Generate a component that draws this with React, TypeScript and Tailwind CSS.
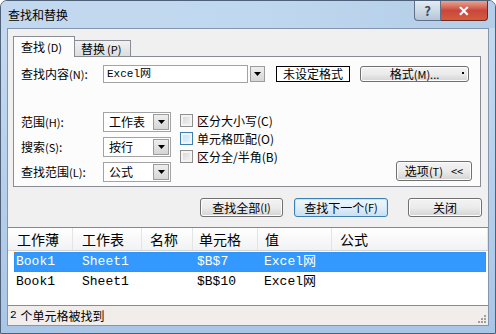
import React from 'react';

const cjk = "font-['Noto_Sans_CJK_SC',sans-serif]";
const mono = "font-['Liberation_Mono','Noto_Sans_CJK_SC',monospace]";

function Arrow() {
  return (
    <svg width="7" height="4" viewBox="0 0 7 4">
      <path d="M0 0h7L3.5 4z" fill="#000" />
    </svg>
  );
}

function Btn({ children, className = '', focus = false }: { children: React.ReactNode; className?: string; focus?: boolean }) {
  return (
    <div
      className={`flex items-center justify-center rounded-[3px] border text-[12px] text-black ${
        focus
          ? 'border-[#3c7fb1] bg-gradient-to-b from-[#eef6fc] via-[#e1eef8] to-[#c9dff0] shadow-[inset_0_0_0_1px_#bfe6fb]'
          : 'border-[#707070] bg-gradient-to-b from-[#f3f3f3] via-[#ebebeb] to-[#d4d4d4] shadow-[inset_0_0_0_1px_#fcfcfc]'
      } ${className}`}
    >
      {children}
    </div>
  );
}

function Combo({ value }: { value: string }) {
  return (
    <div className="flex h-[20px] w-[68px] items-center border border-[#a3a3a3] bg-white">
      <span className="flex-1 pl-[5px] text-[12px] leading-none">{value}</span>
      <div className="mr-[1px] flex h-[16px] w-[16px] items-center justify-center border border-[#9c9c9c] bg-gradient-to-b from-[#eeeeee] to-[#d6d6d6]">
        <Arrow />
      </div>
    </div>
  );
}

function Check({ label, hover = false }: { label: string; hover?: boolean }) {
  return (
    <div className="flex h-[13px] items-center gap-[4px]">
      <div
        className={`h-[13px] w-[13px] border ${
          hover ? 'border-[#3c7fb1] bg-gradient-to-br from-[#b9e1fa] to-[#e9f6fd]' : 'border-[#8f8f8f] bg-gradient-to-br from-[#d4d4d4] to-[#f6f6f6]'
        } shadow-[inset_0_0_0_2px_#f4f4f4]`}
      />
      <span className="text-[12px] leading-none">{label}</span>
    </div>
  );
}

const cols = 'grid grid-cols-[65px_69px_51px_65px_74px_1fr]';
const rowCols = 'grid grid-cols-[59px_69px_51px_65px_74px_1fr]';

export default function App() {
  return (
    <div className={`${cjk} h-[334px] w-[496px] overflow-hidden rounded-t-[7px] border border-[#4f6178] bg-gradient-to-b from-[#c6dbf1] to-[#a9c6e6] text-black`}>
      {/* title bar */}
      <div className="flex h-[27px] items-start bg-gradient-to-r from-[#c3d8ef] via-[#c0d8ef] to-[#b4cde8]">
        <span className="mt-[7px] pl-[7px] text-[12px] leading-[14px]">查找和替换</span>
        <div className="ml-auto mr-[7px] flex">
          <div className="flex h-[20px] w-[27px] items-center justify-center rounded-bl-[4px] border border-t-0 border-[#5f7088] bg-gradient-to-b from-[#e4ebf3] via-[#cdd9e5] to-[#b4c5d8] text-[13px] font-bold text-[#384b63]">?</div>
          <div className="flex h-[20px] w-[47px] items-center justify-center rounded-br-[4px] border border-l-0 border-t-0 border-[#6b2a22] bg-gradient-to-b from-[#e8a493] via-[#c8473a] to-[#d65b3f] text-[14px] font-bold text-white">✕</div>
        </div>
      </div>

      {/* client area */}
      <div className="mx-[6px] flex h-[298px] flex-col border border-[#8496ad] bg-[#f0f0f0]">
        {/* tabs */}
        <div className="ml-[5px] mt-[7px] flex items-end">
          <div className="z-10 -mb-px flex h-[21px] w-[62px] items-center border border-b-0 border-[#898c95] bg-[#fcfcfc] pl-[7px] text-[12px]">
            查找<span className="ml-[2px] text-[11px]">(D)</span>
          </div>
          <div className="-mb-px flex h-[17px] w-[56px] items-center border border-l-0 border-b-0 border-[#898c95] bg-gradient-to-b from-[#f2f2f2] to-[#dcdcdc] pl-[6px] text-[12px]">
            替换<span className="ml-[2px] text-[11px]">(P)</span>
          </div>
        </div>

        {/* tab panel */}
        <div className="ml-[5px] mr-[7px] flex h-[131px] flex-col border border-[#898c95] bg-[#fcfcfc] pl-[7px] pt-[8px]">
          <div className="flex h-[18px] items-center">
            <span className="w-[82px] text-[12px]">查找内容<span className="text-[11px]">(N)</span>:</span>
            <div className={`${mono} flex h-[18px] w-[145px] items-center border border-[#a3a3a3] bg-white pl-[3px] text-[11px]`}>
              Excel网
            </div>
            <div className="ml-[2px] flex h-[16px] w-[15px] items-center justify-center border border-[#9c9c9c] bg-gradient-to-b from-[#eeeeee] to-[#d6d6d6]">
              <Arrow />
            </div>
            <div className="ml-[11px] flex h-[16px] w-[74px] items-center justify-center border border-black bg-white text-[12px]">未设定格式</div>
            <Btn className="relative ml-[10px] h-[16px] w-[109px]">
              格式<span className="text-[11px]">(M)...</span>
              <span className="absolute right-[4px] top-[5px] h-[2px] w-[2px] bg-black" />
            </Btn>
          </div>

          <div className="mt-[29px] flex">
            <div className="flex flex-col gap-[5px]">
              {[
                ['范围', '(H)', '工作表'],
                ['搜索', '(S)', '按行'],
                ['查找范围', '(L)', '公式'],
              ].map(([l, k, v]) => (
                <div key={l} className="flex h-[20px] items-center">
                  <span className="w-[82px] text-[12px]">
                    {l}
                    <span className="text-[11px]">{k}</span>:
                  </span>
                  <Combo value={v} />
                </div>
              ))}
            </div>
            <div className="ml-[9px] mt-[2px] flex flex-col gap-[5px]">
              <Check label="区分大小写(C)" />
              <Check label="单元格匹配(O)" hover />
              <Check label="区分全/半角(B)" />
            </div>
            <Btn className="ml-auto mr-[8px] mt-[49px] h-[20px] w-[76px] gap-[8px]">
              <span>
                选项<span className="text-[11px]">(T)</span>
              </span>
              <span className="text-[11px]">&lt;&lt;</span>
            </Btn>
          </div>
        </div>

        {/* buttons */}
        <div className="mt-[11px] flex justify-end pr-[6px]">
          <Btn className="h-[19px] w-[83px]">
            查找全部<span className="text-[11px]">(I)</span>
          </Btn>
          <Btn focus className="ml-[11px] h-[19px] w-[94px]">
            查找下一个<span className="text-[11px]">(F)</span>
          </Btn>
          <Btn className="ml-[20px] h-[19px] w-[74px]">关闭</Btn>
        </div>

        {/* result list */}
        <div className="mt-[10px] flex flex-1 flex-col border-t border-[#828790] bg-white">
          <div className={`${cols} h-[23px] items-center border-b border-[#d5d5d5] bg-gradient-to-b from-white to-[#f1f2f4] text-[14px]`}>
            {['工作薄', '工作表', '名称', '单元格', '值', '公式'].map((h, i) => (
              <div key={h} className={`flex h-full items-center border-r border-[#e3e4e6] ${['pl-[9px]', 'pl-[9px]', 'pl-[8px]', 'pl-[6px]', 'pl-[7px]', 'pl-[8px]'][i]}`}>
                {h}
              </div>
            ))}
          </div>
          {[
            ['Book1', 'Sheet1', '', '$B$7', 'Excel网'],
            ['Book1', 'Sheet1', '', '$B$10', 'Excel网'],
          ].map((r, ri) => (
            <div
              key={ri}
              className={`${rowCols} ${mono} ml-[6px] mr-[2px] h-[20px] items-center text-[13px] ${
                ri === 0 ? 'mt-[1px] bg-[#3399ff] text-white outline outline-1 outline-dotted outline-[#c06a2d] -outline-offset-1' : ''
              }`}
            >
              {r.map((c, ci) => (
                <div key={ci} className={['pl-[2px]', 'pl-[9px]', 'pl-[8px]', 'pl-[4px]', 'pl-[6px]'][ci]}>
                  {c}
                </div>
              ))}
              <div />
            </div>
          ))}
          <div className="flex-1" />
          <div className="relative flex h-[20px] items-center border-t border-[#8b8b8b] bg-[#f0edeb] pl-[2px] text-[12px]">
            <span className={`${mono} text-[11px]`}>2</span>
            <span className="ml-[4px]">个单元格被找到</span>
            <div className="absolute bottom-[2px] right-[2px] grid grid-cols-3 gap-[1px]">
              {[0, 0, 1, 0, 1, 1, 1, 1, 1].map((d, i) => (
                <span key={i} className={`h-[2px] w-[2px] ${d ? 'bg-[#a0a0a0]' : ''}`} />
              ))}
            </div>
          </div>
        </div>
      </div>
    </div>
  );
}
